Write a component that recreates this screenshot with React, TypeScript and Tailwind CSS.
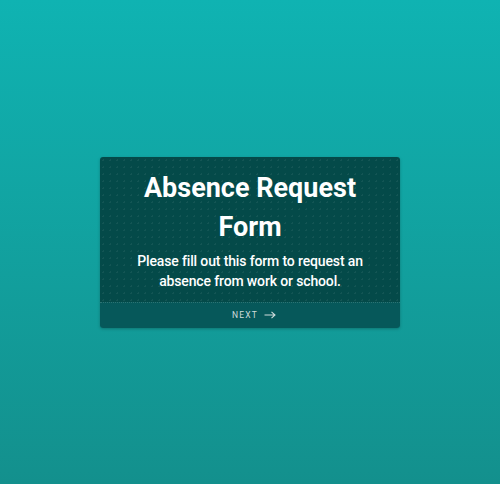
import React from "react";

export default function App() {
  return (
    <div
      className="w-full h-[484px] flex items-center justify-center bg-gradient-to-b from-[#0fb3b2] to-[#13908d]"
      style={{ fontFamily: "Roboto, 'Noto Sans', sans-serif" }}
    >
      <div className="w-[300px] rounded-[3px] overflow-hidden shadow-[0_1px_3px_rgba(0,0,0,0.25)]">
        <div className="bg-[#044a49] bg-[radial-gradient(rgba(255,255,255,0.06)_1px,transparent_1px)] bg-[length:7px_7px] px-2 pt-[12px] pb-[11px] text-center text-white">
          <h1 className="text-[27px] font-bold leading-[39px] px-[30px]">Absence Request Form</h1>
          <p className="mt-[4px] text-[14px] font-medium leading-[20px] tracking-[-0.01em] px-2">
            Please fill out this form to request an absence from work or school.
          </p>
        </div>
        <div className="border-t border-dotted border-[#2c7272] bg-[#06585a] h-[26px] flex items-center justify-center gap-[6px] pl-[8px] text-[#cfdcdc]">
          <span className="text-[8.5px] tracking-[0.14em] font-normal">NEXT</span>
          <svg width="12" height="8" viewBox="0 0 12 8" fill="none" stroke="currentColor" strokeWidth="1.1">
            <path d="M0.5 4H11M7.5 0.8L11 4L7.5 7.2" />
          </svg>
        </div>
      </div>
    </div>
  );
}
